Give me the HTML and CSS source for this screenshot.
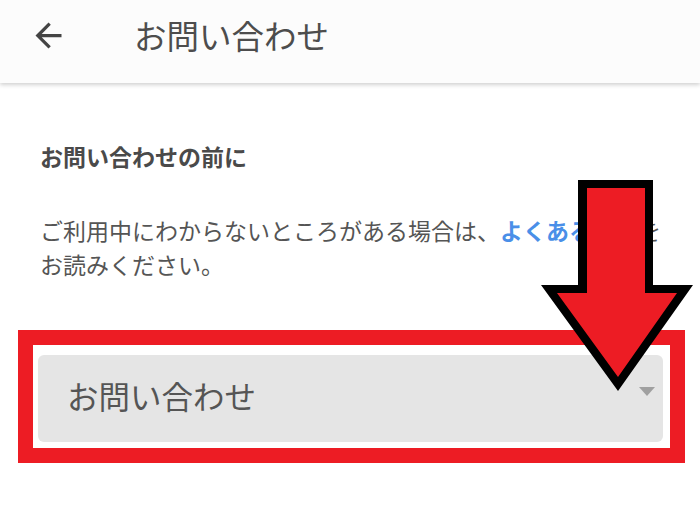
FILE: index.html
```html
<!DOCTYPE html>
<html lang="ja">
<head>
<meta charset="utf-8">
<link rel="stylesheet" href="styles.css">
</head>
<body>
<header class="appbar">
  <svg class="back" viewBox="0 0 24 24"><path d="M20 11H7.83l5.59-5.59L12 4l-8 8 8 8 1.41-1.41L7.83 13H20v-2z"/></svg>
  <h1 class="title">お問い合わせ</h1>
</header>
<main class="content">
  <h2 class="heading">お問い合わせの前に</h2>
  <p class="lead">ご利用中にわからないところがある場合は、<a class="link">よくある質問</a>を<br>お読みください。</p>
  <div class="highlight">
    <div class="select">
      <span class="select-text">お問い合わせ</span>
      <span class="caret"></span>
    </div>
  </div>
</main>
<svg class="pointer" viewBox="537 176 160 220" width="160" height="220">
  <polygon points="578,180 653,180 653,285 693,285 618,391 541,285 578,285" fill="#000"/>
  <polygon points="587,188 645,188 645,293 677,293 618,377 557,293 587,293" fill="#ed1c24"/>
</svg>
</body>
</html>
```
FILE: styles.css
```css
html, body {
  margin: 0;
  padding: 0;
  background: #fff;
  font-family: "Noto Sans CJK JP", "Noto Sans", sans-serif;
  color: #4d4d4d;
}
body {
  position: relative;
  width: 700px;
  height: 506px;
  overflow: hidden;
}
.appbar {
  height: 83px;
  box-sizing: border-box;
  padding-bottom: 13px;
  display: flex;
  align-items: center;
  background: #fcfcfc;
  box-shadow: 0 2px 4px rgba(0,0,0,0.18);
  position: relative;
  z-index: 1;
}
.back {
  width: 39px;
  height: 39px;
  margin-left: 29px;
  fill: #444;
}
.title {
  margin: 0 0 0 66px;
  font-size: 32.5px;
  font-weight: 400;
  line-height: 40px;
  color: #4d4d4d;
}
.content {
  padding-top: 58px;
}
.heading {
  margin: 0 0 0 40px;
  font-size: 23px;
  line-height: 30px;
  font-weight: 700;
  color: #4a4a4a;
}
.lead {
  margin: 42px 0 0 40px;
  font-size: 23px;
  line-height: 34px;
  color: #555;
}
.link {
  color: #4a8fe8;
  font-weight: 700;
}
.highlight {
  margin: 49px 15px 0 18px;
  border: 15px solid #ed1c24;
  padding: 10px 7px 6px 5px;
}
.select {
  height: 87px;
  border-radius: 6px;
  background: #e5e5e5;
  display: flex;
  align-items: center;
  padding: 0 8px 0 29px;
}
.select-text {
  font-size: 31.5px;
  line-height: 40px;
  margin-bottom: 8px;
  color: #555;
}
.caret {
  margin-left: auto;
  margin-bottom: 14px;
  width: 0;
  height: 0;
  border-left: 8.5px solid transparent;
  border-right: 8.5px solid transparent;
  border-top: 9px solid #a0a0a0;
}
.pointer {
  position: absolute;
  left: 537px;
  top: 176px;
}
```
